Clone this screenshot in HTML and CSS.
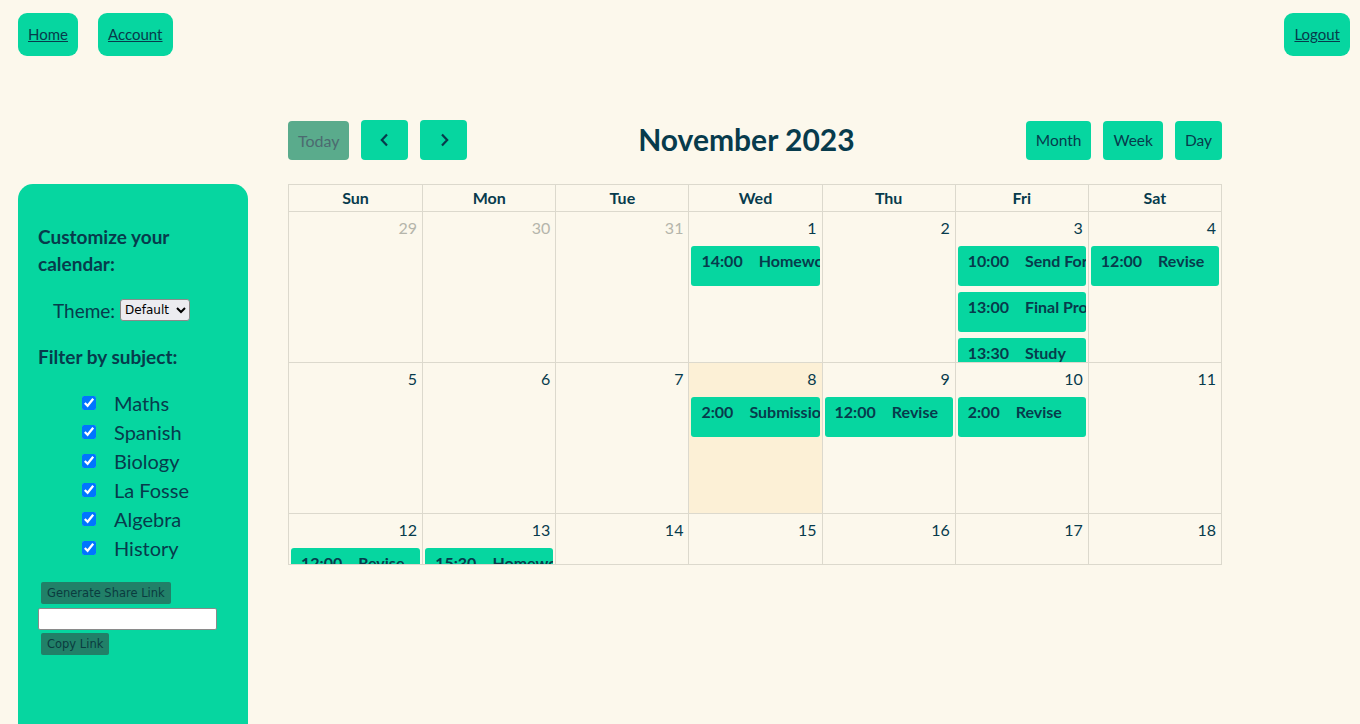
FILE: index.html
```html
<!DOCTYPE html>
<html lang="en">
<head>
<meta charset="utf-8">
<title>Calendar</title>
<link rel="stylesheet" href="styles.css">
</head>
<body>
<nav class="topbar">
  <div class="nav-left">
    <a class="nav-btn" href="#">Home</a>
    <a class="nav-btn" href="#">Account</a>
  </div>
  <a class="nav-btn" href="#">Logout</a>
</nav>

<div class="layout">
  <aside class="sidebar">
    <h3 class="side-title">Customize your calendar:</h3>
    <div class="theme-row">
      <label class="theme-label" for="theme">Theme:</label>
      <select id="theme" class="theme-select"><option>Default</option></select>
    </div>
    <h3 class="side-title filter-title">Filter by subject:</h3>
    <ul class="subjects">
      <li><input type="checkbox" checked><span>Maths</span></li>
      <li><input type="checkbox" checked><span>Spanish</span></li>
      <li><input type="checkbox" checked><span>Biology</span></li>
      <li><input type="checkbox" checked><span>La Fosse</span></li>
      <li><input type="checkbox" checked><span>Algebra</span></li>
      <li><input type="checkbox" checked><span>History</span></li>
    </ul>
    <div class="share">
      <button class="share-btn">Generate Share Link</button>
      <input class="share-input" type="text">
      <button class="share-btn">Copy Link</button>
    </div>
  </aside>

  <main class="calendar">
    <div class="toolbar">
      <div class="tb-group">
        <button class="tb-btn today">Today</button>
        <button class="tb-btn arrow" aria-label="prev">
          <svg width="14" height="16" viewBox="0 0 14 16"><path d="M9 2.5 L3.8 8 L9 13.5" fill="none" stroke="#073b4c" stroke-width="2.2"/></svg>
        </button>
        <button class="tb-btn arrow" aria-label="next">
          <svg width="14" height="16" viewBox="0 0 14 16"><path d="M5 2.5 L10.2 8 L5 13.5" fill="none" stroke="#073b4c" stroke-width="2.2"/></svg>
        </button>
      </div>
      <h2 class="title">November 2023</h2>
      <div class="tb-group">
        <button class="tb-btn view">Month</button>
        <button class="tb-btn view">Week</button>
        <button class="tb-btn view">Day</button>
      </div>
    </div>

    <div class="grid">
      <div class="head-row">
        <div class="head-cell">Sun</div>
        <div class="head-cell">Mon</div>
        <div class="head-cell">Tue</div>
        <div class="head-cell">Wed</div>
        <div class="head-cell">Thu</div>
        <div class="head-cell">Fri</div>
        <div class="head-cell">Sat</div>
      </div>
      <div class="body">
        <div class="week">
          <div class="day other"><div class="num">29</div></div>
          <div class="day other"><div class="num">30</div></div>
          <div class="day other"><div class="num">31</div></div>
          <div class="day"><div class="num">1</div>
            <div class="event"><span class="time">14:00</span><span class="etitle">Homework</span></div>
          </div>
          <div class="day"><div class="num">2</div></div>
          <div class="day"><div class="num">3</div>
            <div class="event"><span class="time">10:00</span><span class="etitle">Send Form</span></div>
            <div class="event"><span class="time">13:00</span><span class="etitle">Final Project</span></div>
            <div class="event"><span class="time">13:30</span><span class="etitle">Study</span></div>
          </div>
          <div class="day"><div class="num">4</div>
            <div class="event"><span class="time">12:00</span><span class="etitle">Revise</span></div>
          </div>
        </div>
        <div class="week">
          <div class="day"><div class="num">5</div></div>
          <div class="day"><div class="num">6</div></div>
          <div class="day"><div class="num">7</div></div>
          <div class="day today-cell"><div class="num">8</div>
            <div class="event"><span class="time">2:00</span><span class="etitle">Submission</span></div>
          </div>
          <div class="day"><div class="num">9</div>
            <div class="event"><span class="time">12:00</span><span class="etitle">Revise</span></div>
          </div>
          <div class="day"><div class="num">10</div>
            <div class="event"><span class="time">2:00</span><span class="etitle">Revise</span></div>
          </div>
          <div class="day"><div class="num">11</div></div>
        </div>
        <div class="week">
          <div class="day"><div class="num">12</div>
            <div class="event"><span class="time">12:00</span><span class="etitle">Revise</span></div>
          </div>
          <div class="day"><div class="num">13</div>
            <div class="event"><span class="time">15:30</span><span class="etitle">Homework</span></div>
          </div>
          <div class="day"><div class="num">14</div></div>
          <div class="day"><div class="num">15</div></div>
          <div class="day"><div class="num">16</div></div>
          <div class="day"><div class="num">17</div></div>
          <div class="day"><div class="num">18</div></div>
        </div>
      </div>
    </div>
  </main>
</div>
</body>
</html>
```

FILE: styles.css
```css
* { box-sizing: border-box; }

html, body {
  margin: 0;
  background: #fcf8ec;
  color: #073b4c;
  font-family: "Lato", "Open Sans", sans-serif;
}

.topbar {
  display: flex;
  justify-content: space-between;
  align-items: flex-start;
  padding: 13px 10px 0 18px;
}

.nav-left {
  display: flex;
  gap: 20px;
}

.nav-btn {
  display: block;
  height: 43px;
  line-height: 43px;
  padding: 0 10px;
  background: #06d6a0;
  border-radius: 9px;
  color: #073b4c;
  font-size: 15px;
  text-decoration: underline;
}

.layout {
  display: flex;
  align-items: flex-start;
  gap: 40px;
  padding: 64px 0 0 18px;
}

/* Sidebar */
.sidebar {
  width: 230px;
  margin-top: 64px;
  min-height: 570px;
  padding: 20px 20px 40px;
  background: #06d6a0;
  border-radius: 15px;
}

.side-title {
  margin: 19px 0 0;
  font-size: 19px;
  line-height: 27px;
  font-weight: 700;
}

.theme-row {
  display: flex;
  align-items: center;
  gap: 5px;
  margin: 20px 0 0 15px;
  height: 26px;
}

.theme-label {
  font-size: 19px;
}

.theme-select {
  height: 22px;
  width: 70px;
  font-family: "DejaVu Sans", sans-serif;
  font-size: 12px;
  border: 1px solid #8a8a8a;
  border-radius: 3px;
  background: #ececf0;
  color: #000;
}

.filter-title {
  margin-top: 20px;
}

.subjects {
  list-style: none;
  margin: 18px 0 0;
  padding: 0 0 0 44px;
}

.subjects li {
  display: flex;
  align-items: center;
  height: 29px;
  font-size: 20px;
}

.subjects input {
  width: 14px;
  height: 14px;
  margin: 0 18px 0 0;
}

.share {
  display: flex;
  flex-direction: column;
  align-items: flex-start;
  margin-top: 20px;
}

.share-btn {
  margin: 0 0 0 3px;
  height: 22px;
  padding: 0 6px;
  border: none;
  border-radius: 2px;
  background: #218068;
  color: #0b3b3f;
  font-family: "DejaVu Sans", sans-serif;
  font-size: 11.5px;
}

.share-input {
  width: 179px;
  height: 22px;
  margin: 4px 0 3px;
  border: 1px solid #8a8a8a;
  border-radius: 2px;
  background: #fff;
}

/* Calendar */
.calendar {
  width: 934px;
}

.toolbar {
  display: flex;
  justify-content: space-between;
  align-items: center;
  height: 40px;
  margin-bottom: 24px;
}

.tb-group {
  display: flex;
  gap: 12px;
  align-items: center;
}

.tb-btn {
  height: 39px;
  padding: 0 10px;
  border: none;
  border-radius: 4px;
  background: #06d6a0;
  color: #073b4c;
  font-family: inherit;
  font-size: 16px;
}

.tb-btn.today {
  width: 61px;
  background: #5aab8c;
  color: #4c6a70;
}

.tb-btn.arrow {
  width: 47px;
  height: 40px;
  display: flex;
  align-items: center;
  justify-content: center;
}

.tb-btn.view {
  padding: 0 10px;
  font-size: 15.5px;
}

.title {
  margin: -3px 0 0;
  font-size: 30px;
  font-weight: 700;
}

.grid {
  border: 1px solid #dcd9cd;
}

.head-row,
.week {
  display: grid;
  grid-template-columns: repeat(7, 1fr);
}

.head-cell {
  height: 27px;
  line-height: 26px;
  text-align: center;
  font-weight: 700;
  font-size: 16px;
  border-left: 1px solid #dcd9cd;
  border-bottom: 1px solid #dcd9cd;
}

.head-cell:first-child,
.day:first-child {
  border-left: none;
}

.body {
  height: 352px;
  overflow: hidden;
}

.week {
  height: 151px;
}

.day {
  border-left: 1px solid #dcd9cd;
  border-bottom: 1px solid #dcd9cd;
  overflow: hidden;
  padding: 0 2px;
}

.today-cell {
  background: #fcf0d6;
}

.num {
  text-align: right;
  padding: 6px 3px 0 0;
  height: 34px;
  line-height: 20px;
  font-size: 16px;
}

.other .num {
  color: #b5b5ab;
}

.event {
  height: 40px;
  margin-bottom: 6px;
  padding: 5px 10px 0;
  background: #06d6a0;
  border-radius: 3px;
  white-space: nowrap;
  overflow: hidden;
  font-weight: 700;
  font-size: 16px;
  line-height: 20px;
}

.time {
  margin-right: 16px;
}
```
